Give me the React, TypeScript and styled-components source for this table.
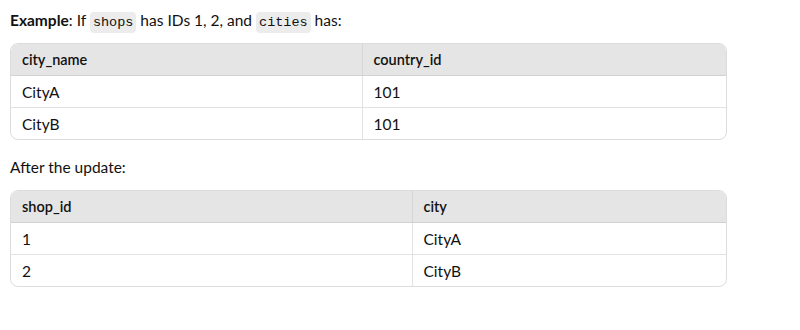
import * as React from 'react';
import styled, { createGlobalStyle } from 'styled-components';

const GlobalStyle = createGlobalStyle`
  body {
    margin: 0;
    background: #ffffff;
    color: #111111;
    font-family: Lato, 'Noto Sans', sans-serif;
    font-size: 15.5px;
  }
`;

const Page = styled.div`
  width: 717px;
  padding: 8px 0 0 10px;
  display: flex;
  flex-direction: column;
`;

const Para = styled.p`
  margin: 0;
  height: 24px;
  line-height: 24px;
`;

const Strong = styled.strong`
  font-weight: 700;
`;

const Code = styled.code`
  display: inline-block;
  font-family: 'Liberation Mono', 'DejaVu Sans Mono', monospace;
  font-size: 13.5px;
  line-height: 21px;
  background: #ececec;
  border-radius: 4px;
  padding: 0 3px;
`;

const TableWrap = styled.div`
  margin: 11px 0 15px;
  border: 1px solid #dcdcdc;
  border-radius: 8px;
  overflow: hidden;
`;

const Table = styled.table`
  width: 100%;
  border-collapse: collapse;
  table-layout: fixed;
`;

const Th = styled.th`
  background: #e5e5e5;
  font-size: 14.5px;
  font-weight: 600;
  text-align: left;
  height: 31px;
  padding: 0 11px;
  border-bottom: 1px solid #d2d2d2;
  & + & {
    border-left: 1px solid #d6d6d6;
  }
`;

const Td = styled.td`
  height: 31px;
  padding: 0 11px;
  border-top: 1px solid #e2e2e2;
  & + & {
    border-left: 1px solid #e2e2e2;
  }
`;

interface IDataTable {
  columns: string[];
  firstWidth: number;
  rows: string[][];
}

const DataTable = ({ columns, firstWidth, rows }: IDataTable) => (
  <TableWrap>
    <Table>
      <colgroup>
        <col style={{ width: firstWidth }} />
        <col />
      </colgroup>
      <thead>
        <tr>
          {columns.map(c => (
            <Th key={c}>{c}</Th>
          ))}
        </tr>
      </thead>
      <tbody>
        {rows.map((r, i) => (
          <tr key={i}>
            {r.map((cell, j) => (
              <Td key={j}>{cell}</Td>
            ))}
          </tr>
        ))}
      </tbody>
    </Table>
  </TableWrap>
);

export default function App() {
  return (
    <Page>
      <GlobalStyle />
      <Para>
        <Strong>Example</Strong>: If <Code>shops</Code> has IDs 1, 2, and{' '}
        <Code>cities</Code> has:
      </Para>
      <DataTable
        columns={['city_name', 'country_id']}
        firstWidth={351}
        rows={[
          ['CityA', '101'],
          ['CityB', '101'],
        ]}
      />
      <Para>After the update:</Para>
      <DataTable
        columns={['shop_id', 'city']}
        firstWidth={401}
        rows={[
          ['1', 'CityA'],
          ['2', 'CityB'],
        ]}
      />
    </Page>
  );
}
